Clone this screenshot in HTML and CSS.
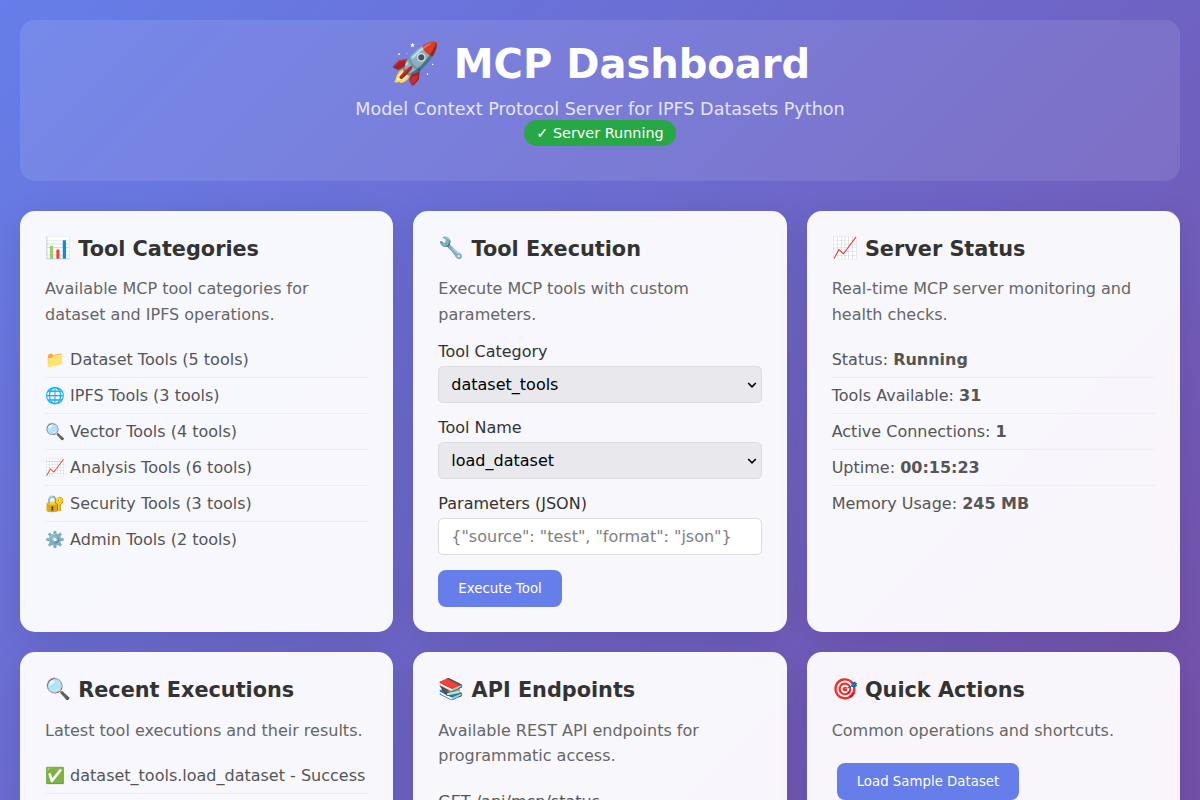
FILE: index.html
```html
<!DOCTYPE html>
<html lang="en">
<head>
<meta charset="UTF-8">
<title>MCP Dashboard</title>
<link rel="stylesheet" href="styles.css">
</head>
<body>
<div class="container">
  <header class="header">
    <h1><span class="emoji">🚀</span> MCP Dashboard</h1>
    <p>Model Context Protocol Server for IPFS Datasets Python</p>
    <div class="status-badge">✓ Server Running</div>
  </header>
  <main class="grid">
    <section class="card">
      <h3><span class="emoji">📊</span> Tool Categories</h3>
      <p>Available MCP tool categories for dataset and IPFS operations.</p>
      <ul class="list">
        <li>📁 Dataset Tools (5 tools)</li>
        <li>🌐 IPFS Tools (3 tools)</li>
        <li>🔍 Vector Tools (4 tools)</li>
        <li>📈 Analysis Tools (6 tools)</li>
        <li>🔐 Security Tools (3 tools)</li>
        <li>⚙️ Admin Tools (2 tools)</li>
      </ul>
    </section>
    <section class="card">
      <h3><span class="emoji">🔧</span> Tool Execution</h3>
      <p>Execute MCP tools with custom parameters.</p>
      <div class="field">
        <label for="category">Tool Category</label>
        <div class="select-wrap">
          <select id="category" class="control select"><option>dataset_tools</option></select>
          <svg class="chevron" viewBox="0 0 10 6"><path d="M1.2 1 L5 4.8 L8.8 1"/></svg>
        </div>
      </div>
      <div class="field">
        <label for="tool">Tool Name</label>
        <div class="select-wrap">
          <select id="tool" class="control select"><option>load_dataset</option></select>
          <svg class="chevron" viewBox="0 0 10 6"><path d="M1.2 1 L5 4.8 L8.8 1"/></svg>
        </div>
      </div>
      <div class="field">
        <label for="params">Parameters (JSON)</label>
        <input id="params" class="control" type="text" placeholder='{"source": "test", "format": "json"}'>
      </div>
      <button class="btn">Execute Tool</button>
    </section>
    <section class="card">
      <h3><span class="emoji">📈</span> Server Status</h3>
      <p>Real-time MCP server monitoring and health checks.</p>
      <ul class="list">
        <li>Status: <strong>Running</strong></li>
        <li>Tools Available: <strong>31</strong></li>
        <li>Active Connections: <strong>1</strong></li>
        <li>Uptime: <strong>00:15:23</strong></li>
        <li>Memory Usage: <strong>245 MB</strong></li>
      </ul>
    </section>
    <section class="card">
      <h3><span class="emoji">🔍</span> Recent Executions</h3>
      <p>Latest tool executions and their results.</p>
      <ul class="list">
        <li>✅ dataset_tools.load_dataset - Success</li>
        <li></li>
      </ul>
    </section>
    <section class="card">
      <h3><span class="emoji">📚</span> API Endpoints</h3>
      <p>Available REST API endpoints for programmatic access.</p>
      <ul class="list">
        <li>GET /api/mcp/status</li>
      </ul>
    </section>
    <section class="card">
      <h3><span class="emoji">🎯</span> Quick Actions</h3>
      <p>Common operations and shortcuts.</p>
      <button class="btn btn-action">Load Sample Dataset</button>
    </section>
  </main>
</div>
</body>
</html>
```
FILE: styles.css
```css
* {
  margin: 0;
  padding: 0;
  box-sizing: border-box;
}

body {
  height: 800px;
  overflow: hidden;
  font-family: "DejaVu Sans", sans-serif;
  color: #333;
  background: linear-gradient(135deg, #667eea 0%, #764ba2 100%) 0 0 / 100% 1008px no-repeat;
}

.container {
  max-width: 1200px;
  padding: 20px;
}

.header {
  height: 161px;
  margin-bottom: 30px;
  padding: 21px 20px 20px;
  border-radius: 15px;
  background: rgba(255, 255, 255, 0.1);
  color: #fff;
  text-align: center;
}

.header h1 {
  margin-bottom: 11px;
  font-size: 40px;
  line-height: 47px;
}

.emoji {
  line-height: 1;
  vertical-align: 1px;
}

.header p {
  font-size: 17.6px;
  line-height: 21px;
  opacity: 0.8;
}

.status-badge {
  display: inline-block;
  padding: 5px 12px;
  border-radius: 20px;
  background: #28a745;
  font-size: 14.4px;
  line-height: 16px;
}

.grid {
  display: grid;
  grid-template-columns: repeat(3, 1fr);
  gap: 20px;
}

.card {
  padding: 25px;
  border-radius: 15px;
  background: rgba(255, 255, 255, 0.95);
  box-shadow: 0 8px 32px rgba(0, 0, 0, 0.1);
}

.card h3 {
  margin-bottom: 13.2px;
  font-size: 20.8px;
  line-height: 27px;
}

.card p {
  margin-bottom: 15px;
  color: #666;
  font-size: 16px;
  line-height: 25.6px;
}

.list {
  list-style: none;
}

.list li {
  padding: 8px 0;
  border-bottom: 1px solid #eee;
  color: #555;
  line-height: 19px;
}

.list li:last-child {
  border-bottom: none;
}

.field {
  margin-bottom: 15px;
}

.field label {
  display: block;
  margin-bottom: 5px;
  line-height: 19px;
}

.control {
  display: block;
  width: 100%;
  height: 37px;
  padding: 8px 12px;
  border: 1px solid #ddd;
  border-radius: 5px;
  font-family: inherit;
  font-size: 16px;
}

.control::placeholder {
  color: #808080;
}

.select-wrap {
  position: relative;
}

.select {
  appearance: none;
  padding: 6px 12px;
  background: #e9e9ed;
  color: #000;
  line-height: 23px;
}

.chevron {
  position: absolute;
  top: 16px;
  right: 5px;
  width: 10px;
  height: 6px;
  fill: none;
  stroke: #000;
  stroke-width: 1.6;
}

.btn {
  height: 37px;
  padding: 10px 20px;
  border: none;
  border-radius: 8px;
  background: #667eea;
  color: #fff;
  font-family: inherit;
  font-size: 13.333px;
}

.btn-action {
  margin: 5px;
}
```
